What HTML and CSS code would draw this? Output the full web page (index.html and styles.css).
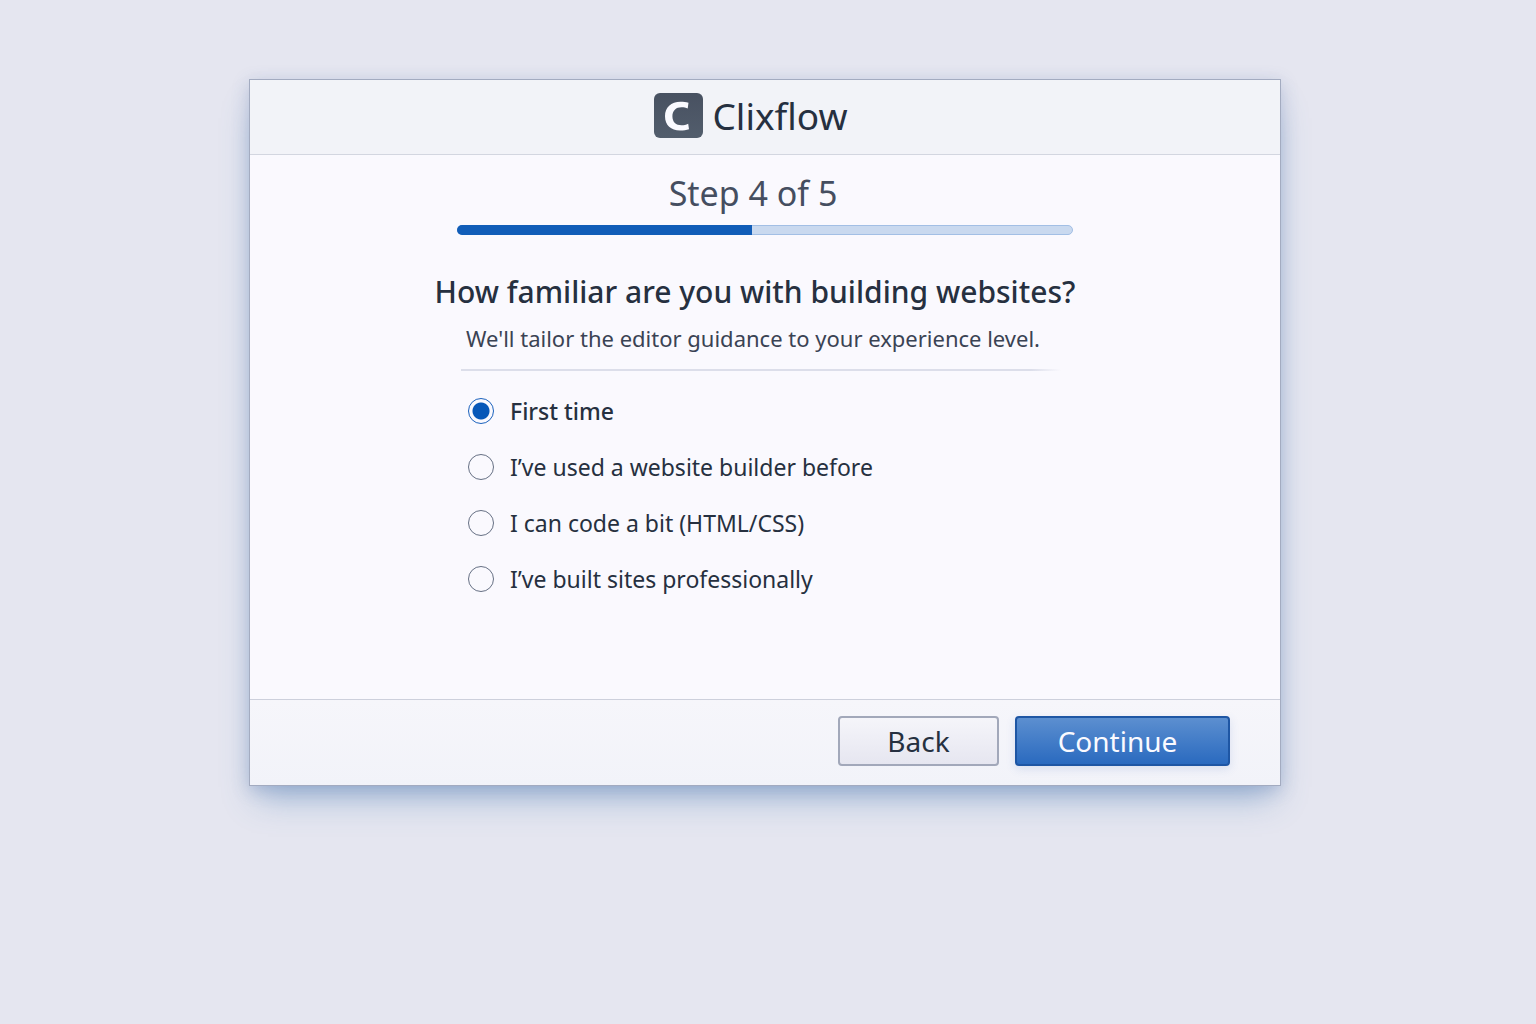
FILE: index.html
```
<!DOCTYPE html>
<html lang="en">
<head>
    <meta charset="UTF-8">
    <meta name="viewport" content="width=device-width, initial-scale=1.0">
    <title>Clixflow</title>
    <link rel="stylesheet" href="styles.css">
</head>
<body>
    <form class="card">
        <header class="card-header">
            <svg class="logo" viewBox="0 0 49 45" aria-hidden="true">
                <defs>
                    <linearGradient id="logo-fill" x1="0" y1="0" x2="0" y2="1">
                        <stop offset="0" stop-color="#485161"/>
                        <stop offset="1" stop-color="#525d6c"/>
                    </linearGradient>
                </defs>
                <rect width="49" height="45" rx="6" fill="url(#logo-fill)"/>
                <path d="M34.500 9.800C32 9 29.500 8.800 26.500 8.800C17 8.800 11 14.500 11 23.300C11 32.200 17 37.600 26 37.600C29.500 37.600 32.500 37.200 35 36.300L34.200 30.700C32 31.700 30 32.200 27.500 32.200C22 32.200 18.400 29 18.400 23.200C18.400 17.600 22 14.200 27.500 14.200C30 14.200 32 14.600 33.700 15.500Z" fill="#fafaff"/>
            </svg>
            <span class="brand">Clixflow</span>
        </header>

        <main class="content">
            <p class="step" id="step">Step 4 of 5</p>
            <div class="progress" role="progressbar" aria-labelledby="step" aria-valuemin="0" aria-valuemax="5" aria-valuenow="4">
                <div class="progress-fill"></div>
            </div>
            <h1 class="question" id="question">How familiar are you with building websites?</h1>
            <p class="hint">We'll tailor the editor guidance to your experience level.</p>
            <hr class="divider">
            <div class="options" role="radiogroup" aria-labelledby="question">
                <label class="option selected"><input type="radio" name="experience" value="first" checked>First time</label>
                <label class="option"><input type="radio" name="experience" value="builder">I’ve used a website builder before</label>
                <label class="option"><input type="radio" name="experience" value="code">I can code a bit (HTML/CSS)</label>
                <label class="option"><input type="radio" name="experience" value="pro">I’ve built sites professionally</label>
            </div>
        </main>

        <footer class="card-footer">
            <button class="btn btn-back" type="button">Back</button>
            <button class="btn btn-continue" type="submit">Continue</button>
        </footer>
    </form>
</body>
</html>
```
FILE: styles.css
```
* {
    box-sizing: border-box;
}

body {
    margin: 0;
    min-height: 100vh;
    padding: 79px 22px 79px 16px;
    background-color: #e5e6f0;
    color: #263040;
    font-family: "Noto Sans", "Open Sans", sans-serif;
}

.card {
    max-width: 1032px;
    margin: 0 auto;
    background-color: #faf9fe;
    border: 1px solid #a3abc0;
    box-shadow: 0 4px 16px rgba(70, 100, 160, 0.25), 0 20px 32px -8px rgba(80, 130, 185, 0.45);
}

.card-header {
    display: flex;
    justify-content: center;
    align-items: center;
    gap: 9px;
    height: 75px;
    padding: 0 28px 3px 0;
    background-color: #f2f3f8;
    border-bottom: 1px solid #d3d6e0;
}

.logo {
    width: 49px;
    height: 45px;
}

.brand {
    font-size: 37px;
    line-height: 48px;
}

.content {
    max-width: 664px;
    margin: 0 auto;
    padding: 16px 0 104px;
}

.step {
    margin: 0;
    padding-right: 24px;
    color: #454e60;
    font-size: 34px;
    line-height: 44px;
    text-align: center;
}

.progress {
    height: 10px;
    margin: 10px 24px 0;
    background-color: #c9d9ef;
    border: 1px solid #a2bfe5;
    border-radius: 5px;
}

.progress-fill {
    width: 48%;
    height: 10px;
    margin: -1px;
    background-color: #115db8;
    border-radius: 5px 0 0 5px;
}

.question {
    margin: 35px 0 0;
    padding-right: 20px;
    font-size: 30px;
    font-weight: 500;
    line-height: 44px;
    text-align: center;
}

.hint {
    margin: 8px 0 0;
    padding-right: 24px;
    color: #3a4354;
    font-size: 22px;
    line-height: 32px;
    text-align: center;
}

.divider {
    height: 2px;
    margin: 15px 36px 0 28px;
    border: 0;
    background: linear-gradient(to right, #dcdeea 95%, transparent);
}

.options {
    display: flex;
    flex-direction: column;
    gap: 24px;
    padding: 24px 36px 0 35px;
}

.option {
    display: flex;
    align-items: center;
    gap: 16px;
    font-size: 23px;
    line-height: 32px;
}

.selected {
    font-weight: 500;
}

.option input {
    appearance: none;
    flex: none;
    width: 26px;
    height: 26px;
    margin: 0;
    border: 1px solid #667084;
    border-radius: 50%;
}

.option input:checked {
    border-color: #1b62bd;
    background: radial-gradient(circle, #0757b8 8px, transparent 9px);
}

.card-footer {
    display: flex;
    justify-content: flex-end;
    align-items: center;
    gap: 16px;
    height: 86px;
    padding: 0 50px 4px 16px;
    background: linear-gradient(#f6f6fb, #f2f3f9);
    border-top: 1px solid #cdd0dc;
}

.btn {
    height: 50px;
    border-radius: 4px;
    font-family: inherit;
    font-size: 28px;
    line-height: 40px;
    cursor: pointer;
}

.btn-back {
    width: 161px;
    color: #263040;
    background: linear-gradient(#f5f5fa, #e6e6f0);
    border: 2px solid #a2a8ba;
}

.btn-continue {
    width: 215px;
    padding-right: 16px;
    color: #fafaff;
    background: linear-gradient(#5c8fd0, #2a6abf);
    border: 2px solid #1e56a4;
    box-shadow: 0 3px 10px rgba(60, 100, 180, 0.15);
}
```
